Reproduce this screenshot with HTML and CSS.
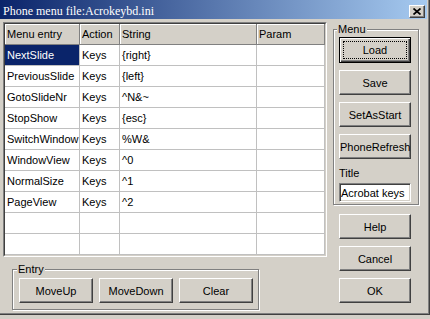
FILE: index.html
```html
<!DOCTYPE html>
<html lang="en">
<head>
  <meta charset="UTF-8" />
  <title>Phone menu file</title>
  <link rel="stylesheet" href="styles.css">
</head>
<body>
  <div class="window">
    <div class="frame">
      <div class="titlebar">
        <span class="title">Phone menu file:Acrokeybd.ini</span>
        <span class="close">
          <svg width="8" height="7" viewBox="0 0 8 7"><path d="M0.5 0.5 L7.5 6.5 M7.5 0.5 L0.5 6.5" stroke="#000" stroke-width="1.7" fill="none"/></svg>
        </span>
      </div>

      <div class="content">
        <div class="left">
          <!-- Menu entries grid -->
          <div class="grid-box">
            <div class="grid">
              <div class="hd">Menu entry</div><div class="hd">Action</div><div class="hd">String</div><div class="hd">Param</div>
              <div class="cell selected">NextSlide</div><div class="cell">Keys</div><div class="cell">{right}</div><div class="cell"></div>
              <div class="cell">PreviousSlide</div><div class="cell">Keys</div><div class="cell">{left}</div><div class="cell"></div>
              <div class="cell">GotoSlideNr</div><div class="cell">Keys</div><div class="cell">^N&amp;~</div><div class="cell"></div>
              <div class="cell">StopShow</div><div class="cell">Keys</div><div class="cell">{esc}</div><div class="cell"></div>
              <div class="cell">SwitchWindow</div><div class="cell">Keys</div><div class="cell">%W&amp;</div><div class="cell"></div>
              <div class="cell">WindowView</div><div class="cell">Keys</div><div class="cell">^0</div><div class="cell"></div>
              <div class="cell">NormalSize</div><div class="cell">Keys</div><div class="cell">^1</div><div class="cell"></div>
              <div class="cell">PageView</div><div class="cell">Keys</div><div class="cell">^2</div><div class="cell"></div>
              <div class="cell"></div><div class="cell"></div><div class="cell"></div><div class="cell"></div>
              <div class="cell"></div><div class="cell"></div><div class="cell"></div><div class="cell"></div>
            </div>
          </div>

          <fieldset class="group entry">
            <legend>Entry</legend>
            <div class="btn-row">
              <button class="btn wide">MoveUp</button>
              <button class="btn wide">MoveDown</button>
              <button class="btn wide">Clear</button>
            </div>
          </fieldset>
        </div>

        <div class="right">
          <fieldset class="group menu">
            <legend>Menu</legend>
            <button class="btn default">Load</button>
            <button class="btn">Save</button>
            <button class="btn">SetAsStart</button>
            <button class="btn">PhoneRefresh</button>
            <div class="label">Title</div>
            <input class="text" value="Acrobat keys" />
          </fieldset>
          <button class="btn help">Help</button>
          <button class="btn">Cancel</button>
          <button class="btn">OK</button>
        </div>
      </div>
    </div>
  </div>
</body>
</html>
```

FILE: styles.css
```css
body {
  margin: 0;
  background-color: #d4d0c8;
  font-family: 'Liberation Sans', Arial, sans-serif;
  font-size: 11px;
  color: #000;
}

.window {
  width: 430px;
  height: 315px;
  box-sizing: border-box;
  border-right: 1px solid #404040;
  border-bottom: 1px solid #404040;
}

.frame {
  height: 100%;
  box-sizing: border-box;
  border-right: 1px solid #808080;
  border-bottom: 1px solid #808080;
  padding-right: 1px;
}

.titlebar {
  height: 19px;
  display: flex;
  justify-content: space-between;
  align-items: flex-start;
  padding-right: 2px;
  background-image: linear-gradient(to right, #0a246a, #a6caf0);
}

.title {
  font-family: 'Liberation Serif', 'Times New Roman', serif;
  font-size: 12px;
  line-height: 15px;
  color: #fff;
  padding: 4px 0 0 3px;
}

.close {
  margin-top: 5px;
  width: 16px;
  height: 13px;
  box-sizing: border-box;
  display: flex;
  align-items: center;
  justify-content: center;
  background-color: #d4d0c8;
  border: 1px solid;
  border-color: #fff #404040 #404040 #fff;
  box-shadow: inset -1px -1px #808080;
}

.close svg {
  display: block;
}

.content {
  display: flex;
  padding: 3px 0 0 3px;
}

.left {
  width: 324px;
}

/* grid */
.grid-box {
  border: 1px solid;
  border-color: #808080 #fff #fff #808080;
}

.grid {
  display: grid;
  grid-template-columns: 75px 40px 137px 68px;
  grid-auto-rows: 21px;
  background-color: #fff;
  border: 1px solid;
  border-color: #404040 #d4d0c8 #d4d0c8 #404040;
}

.hd, .cell {
  box-sizing: border-box;
  padding-left: 2px;
  line-height: 20px;
  white-space: nowrap;
  overflow: hidden;
}

.hd {
  background-color: #d4d0c8;
  border-right: 1px solid #808080;
  border-bottom: 1px solid #808080;
  box-shadow: inset 1px 1px #fff;
}

.cell {
  border-right: 1px solid #c0c0c0;
  border-bottom: 1px solid #c0c0c0;
}

.cell.selected {
  background-color: #0a246a;
  color: #fff;
}

/* group boxes */
.group {
  margin: 0;
  min-width: 0;
  box-sizing: border-box;
  border: 1px solid #808080;
  box-shadow: inset 1px 1px #fff, 1px 1px #fff;
}

.group legend {
  margin-left: -2px;
  padding: 0 1px;
  line-height: 13px;
  background-color: #d4d0c8;
}

.entry {
  width: 247px;
  margin: 6px 0 0 9px;
  padding: 2px 5px 6px 6px;
}

.btn-row {
  display: flex;
  gap: 6px;
}

.right {
  width: 86px;
  margin-left: 6px;
  padding-top: 1px;
  display: flex;
  flex-direction: column;
}

.menu {
  width: 86px;
  padding: 1px 7px 2px 5px;
  display: flex;
  flex-direction: column;
}

/* buttons */
.btn {
  width: 72px;
  height: 25px;
  margin: 7px 0 0 0;
  padding: 0;
  font-family: inherit;
  font-size: 11px;
  color: #000;
  background-color: #d4d0c8;
  border: 1px solid;
  border-color: #fff #404040 #404040 #fff;
  border-radius: 0;
  box-shadow: inset -1px -1px #808080;
}

.btn.wide {
  width: 74px;
  margin: 0;
}

.right > .btn {
  margin-left: 6px;
}

.right > .btn.help {
  margin-top: 9px;
}

.btn.default {
  height: 26px;
  margin-top: 0;
  border-color: #000;
  box-shadow: inset 1px 1px #fff, inset -1px -1px #404040, inset -2px -2px #808080;
  outline: 1px dotted #000;
  outline-offset: -5px;
}

.label {
  margin-top: 8px;
  line-height: 13px;
}

.text {
  width: 72px;
  height: 19px;
  margin-top: 3px;
  box-sizing: border-box;
  padding: 0 0 0 1px;
  font-family: inherit;
  font-size: 11px;
  color: #000;
  background-color: #fff;
  border: 1px solid;
  border-color: #808080 #fff #fff #808080;
  box-shadow: inset 1px 1px #404040, inset -1px -1px #d4d0c8;
  outline: none;
}
```
